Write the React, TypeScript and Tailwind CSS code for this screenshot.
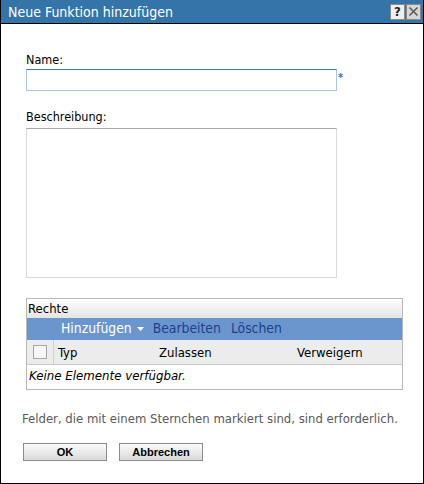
import React from "react";

const font = { fontFamily: '"DejaVu Sans Condensed", "DejaVu Sans", sans-serif' };

function TitleBar() {
  return (
    <div className="flex h-[24px] items-center justify-between border-b border-black bg-[#3574a9] pl-[7px] pr-[2px]">
      <span className="text-[14px] leading-none text-white">Neue Funktion hinzufügen</span>
      <div className="flex gap-px">
        <div className="flex h-[16px] w-[15px] items-center justify-center border border-[#8a8a8a] bg-[#efefef] text-[13px] font-bold leading-none text-[#222]">
          ?
        </div>
        <div className="flex h-[16px] w-[15px] items-center justify-center border border-[#8a8a8a] bg-[#d6d6d6]">
          <svg width="11" height="11" viewBox="0 0 11 11">
            <path d="M1.5 1.5 L9.5 9.5 M9.5 1.5 L1.5 9.5" stroke="#5a5a5a" strokeWidth="1.6" />
          </svg>
        </div>
      </div>
    </div>
  );
}

function RightsTable() {
  return (
    <div className="mt-[20px] w-[377px] border border-[#b9b9b9]">
      <div className="flex h-[19px] items-center bg-gradient-to-b from-white to-[#e4e4e4] pl-[1px] text-[13px] leading-none text-black">
        Rechte
      </div>
      <div className="flex h-[22px] items-center bg-[#6a96cd] pl-[34px] text-[13.8px] leading-none">
        <span className="flex items-center gap-[5px] text-white">
          Hinzufügen
          <svg width="7" height="4" viewBox="0 0 7 4">
            <path d="M0 0 L7 0 L3.5 4 Z" fill="#fff" />
          </svg>
        </span>
        <span className="ml-[9px] text-[#213f8c]">Bearbeiten</span>
        <span className="ml-[10px] text-[#213f8c]">Löschen</span>
      </div>
      <div className="flex h-[25px] items-center border-b border-[#c9c9c9] bg-[#ececec] text-[13px] leading-none text-black">
        <div className="flex h-full w-[27px] items-center justify-center border-r border-[#d0d0d0]">
          <div className="h-[14px] w-[14px] border border-[#a8a8a8] bg-[#f7f7f7]" />
        </div>
        <span className="ml-[4px] w-[101px]">Typ</span>
        <span className="w-[138px]">Zulassen</span>
        <span>Verweigern</span>
      </div>
      <div
        className="flex h-[24px] items-center pl-[2px] text-[11.8px] italic leading-none text-black"
        style={{ fontFamily: '"DejaVu Sans", sans-serif' }}
      >
        Keine Elemente verfügbar.
      </div>
    </div>
  );
}

function Button({ label }: { label: string }) {
  return (
    <button
      className="flex h-[18px] w-[84px] items-center justify-center border border-[#8c8c8c] bg-gradient-to-b from-[#fbfbfb] to-[#dadada] text-[11px] font-bold leading-none text-black"
      style={{ fontFamily: '"Liberation Sans", Arial, sans-serif' }}
    >
      {label}
    </button>
  );
}

export default function App() {
  return (
    <div className="h-[484px] w-[424px] border-x border-b border-black bg-white" style={font}>
      <TitleBar />
      <div className="flex flex-col pl-[25px] pt-[30px]">
        <label className="text-[12.5px] leading-none text-black">Name:</label>
        <div className="mt-[2px] flex items-start">
          <div className="h-[22px] w-[311px] border border-[#a9c7e4] border-t-[#3b79b5] bg-white" />
          <span className="ml-[1px] mt-[3px] text-[11px] font-bold leading-none text-[#3b6fc0]">*</span>
        </div>
        <label className="mt-[20px] text-[12.5px] leading-none text-black">Beschreibung:</label>
        <div className="mt-[5px] h-[150px] w-[311px] border border-[#dadada] border-t-[#a7a7a7] bg-white" />
        <RightsTable />
      </div>
      <p className="mt-[22px] pl-[21px] text-[13px] leading-none text-[#5a5a5a]">
        Felder, die mit einem Sternchen markiert sind, sind erforderlich.
      </p>
      <div className="mt-[18px] flex gap-[12px] pl-[22px]">
        <Button label="OK" />
        <Button label="Abbrechen" />
      </div>
    </div>
  );
}
